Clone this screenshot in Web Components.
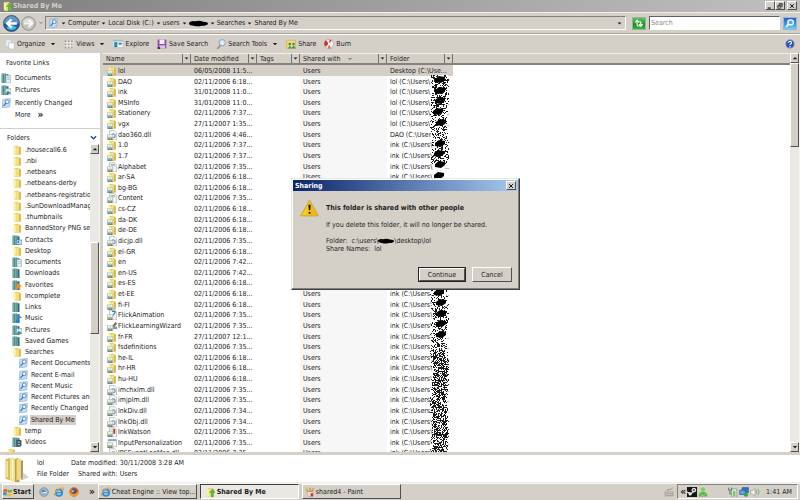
<!DOCTYPE html>
<html lang="en">
<head>
<meta charset="utf-8">
<title>Shared By Me</title>
<style>
html,body{height:100%;margin:0}
body{--face:#d4d0c8;background:var(--face);color:#1c1c1c;font:7px/10px "DejaVu Sans Condensed","Noto Sans",sans-serif;overflow:hidden}
</style>
</head>
<body>
<desk-top></desk-top>
<script>
const BASE = `*{box-sizing:border-box}button,input,a{font:inherit;color:inherit;text-decoration:none}button{border:0;padding:0;margin:0;background:none;display:flex;align-items:center;white-space:nowrap}ul{list-style:none;margin:0;padding:0}h1,h2,p{margin:0;font:inherit}
.raised{background:#d4d0c8;border:1px solid;border-color:#fff #505050 #505050 #fff}`;
function define(name, html, setup){
  const t = document.createElement('template');
  t.innerHTML = '<style>' + BASE + '</style>' + html;
  customElements.define(name, class extends HTMLElement{
    constructor(){ super(); this.attachShadow({mode:'open'}); }
    connectedCallback(){
      if (this.shadowRoot.childNodes.length) return;
      const f = t.content.cloneNode(true);
      if (setup) setup(this, f);
      this.shadowRoot.append(f);
    }
  });
}

const F = '<path d="M3 2l6-1 5 2v12l-9 1-2-2z" fill="#e9cf62"/><path d="M3 2l4 2v12l-4-3z" fill="#fbefa6"/><path d="M8 3l3-1v13H8z" fill="#f6e38c"/><path d="M11 3l3 1v11h-3z" fill="#d9b944"/>';
const PEOPLE = '<path d="M0 7h10v9H0z" fill="#b9bfae"/><circle cx="3" cy="9.500" r="1.800" fill="#f1f5ee"/><circle cx="7" cy="9.500" r="1.800" fill="#f1f5ee"/><path d="M1 16l2-4 2 3 2-3 2 4z" fill="#5d8f7c"/>';
const BOOK = '<path d="M1 1h8v15H1z" fill="#4c8c86"/><path d="M1 1h2v15H1zM5 1h2v15H5z" fill="#7bb3ab"/><path d="M9 2h3v14H9z" fill="#2f6872"/>';
const DOC = '<path d="M4 1h8l3 3v12H4z" fill="#f8fafc" stroke="#9aa4ae"/>';
const SEARCH = '<path d="M3 2l12-1-1 13-12 2z" fill="#c9def2" stroke="#7fa6cf"/><circle cx="10" cy="6" r="3" fill="#f4faff" stroke="#3f7fc4" stroke-width="1.4"/><path d="M8 8l-4 5" stroke="#3f7fc4" stroke-width="2"/>';
const IE = '<circle cx="8" cy="9" r="5" fill="none" stroke="#2c8ee0" stroke-width="3"/><path d="M4 9h9" stroke="#2c8ee0" stroke-width="2"/><path d="M1 14C-1 9 9 0 15 2c1 1 0 3-1 4" fill="none" stroke="#e7a928" stroke-width="1.7"/>';
const ICONS = {
  folder: F,
  shared: F + PEOPLE,
  dll: DOC + '<circle cx="10" cy="9" r="3" fill="none" stroke="#7896b4" stroke-width="2"/>' + PEOPLE,
  app: DOC + '<path d="M6 4h7M6 6h7" stroke="#9b8178"/>' + PEOPLE,
  ink: DOC + '<path d="M6 2h8v8H6z" fill="#e6d9d2"/><path d="M10 3h3v8h-3z" fill="#b8422e"/>' + PEOPLE,
  flick: DOC + '<path d="M8 2h5M9 10l5-8" stroke="#2b83c7" stroke-width="2"/>' + PEOPLE,
  wizard: '<path d="M7 9l7-8 2 3-5 7z" fill="#8f6a55"/><path d="M9 9h7v4H9z" fill="#6f9ac0"/>' + PEOPLE,
  input: '<path d="M2 2h13v12H2z" fill="#fff" stroke="#9aa4ae"/><path d="M2 2h13v3H2z" fill="#8aa4bd"/>' + PEOPLE,
  title: F + '<path d="M10 16V8l-3 1 5-6 4 6h-3v7z" fill="#4fc43a" stroke="#2a8a22" stroke-width=".6"/>',
  book: BOOK,
  docs: BOOK + '<path d="M8 4h7v12H8z" fill="#e8f0f8" stroke="#8ba3b8"/><path d="M10 7h4M10 10h4" stroke="#7f9cba"/>',
  pics: BOOK + '<path d="M7 6h9v8H7z" fill="#d7ecfa" stroke="#7594ae"/><path d="M7 14l4-5 5 5z" fill="#3d8a7c"/>',
  contacts: BOOK + '<path d="M7 8h9v7H7z" fill="#bfe1f7" stroke="#3d80ae"/><circle cx="10" cy="11" r="1.5" fill="#2d6fa0"/>',
  fav: BOOK + '<path d="M10 5l2 3 4 1-3 2 1 4-4-2-4 2 1-4-3-2 4-1z" fill="#f58a1d"/>',
  music: BOOK + '<path d="M10 14V4l5 4" fill="none" stroke="#1b84e0" stroke-width="2"/><circle cx="9" cy="13" r="3" fill="#1b84e0"/>',
  videos: BOOK + '<path d="M7 5h8v10H7z" fill="#354a57"/><path d="M9 7h4v2H9zM9 11h4v2H9z" fill="#9cc7dc"/>',
  search: SEARCH,
  organize: '<path d="M1 1h7l2 2v9H1z" fill="#e6eef4" stroke="#bccbd6"/><path d="M6 6h7l2 2v8H6z" fill="#fff" stroke="#9fb4c4"/>',
  views: '<path d="M1 2h14v13H1z" fill="#eef0f0"/><path d="M1 2h3v3H1zM6 2h3v3H6zM11 2h3v3h-3zM1 7h3v3H1zM6 7h3v3H6zM11 7h3v3h-3zM1 12h3v3H1zM6 12h3v3H6zM11 12h3v3h-3z" fill="#a39e98"/>',
  explore: '<path d="M0 2h16v12H0z" fill="#f4f9fc" stroke="#98adbb"/><path d="M0 2h16v2H0z" fill="#8fbad6"/><path d="M2 5h5v8H2z" fill="#2a8a9d"/><path d="M9 6h5v3H9z" fill="#3c71b5"/>',
  save: '<path d="M1 1h14v14H1z" fill="#8b4fa3"/><path d="M4 1h8v7H4z" fill="#f3eef7"/><path d="M4 10h9v5H4z" fill="#d8c1e2"/><path d="M1 13h4v3H1z" fill="#4b2365"/>',
  mag: '<circle cx="10" cy="6" r="5" fill="#d8eefb" stroke="#85a3ba" stroke-width="1.6"/><path d="M7 10l-5 6" stroke="#9c8a6c" stroke-width="2.4"/>',
  share: '<path d="M1 2h14v13H1z" fill="#f0dc78" stroke="#c8ab3c"/><circle cx="6" cy="8" r="2" fill="#3f7d5c"/><circle cx="12" cy="8" r="2" fill="#47749a"/><path d="M3 15l3-5 3 4 3-4 4 5z" fill="#4f9a55"/>',
  burn: '<circle cx="8" cy="8" r="7.4" fill="#ececf0" stroke="#a9a4aa"/><path d="M8 8L3 2a7 7 0 0 0-1 10zM8 8l1-7 3 1z" fill="#d92b2b"/><path d="M8 8l3 7-5 0z" fill="#d96a5a"/><circle cx="8" cy="8" r="2" fill="#fff"/>',
  help: '<circle cx="8" cy="8" r="7.5" fill="#8996b5"/><circle cx="8" cy="8" r="6" fill="#2b50bd"/><path d="M5.5 6C6 3 11 3 10.500 6.300C10 8 8 8 8 10M8 11.500v2" fill="none" stroke="#fff" stroke-width="1.8"/>',
  refresh: '<path d="M5 4v6q0 3 4 2M2 6l3-4 3 4M11 12V7q0-3-4-2M8 9l3 4 3-4" fill="none" stroke="#fff" stroke-width="1.800"/>',
  find: '<circle cx="9" cy="6" r="4.500" fill="#5fa4ef" stroke="#fff" stroke-width="2"/><path d="M6 9l-4 5" stroke="#fff" stroke-width="2.600"/>',
  stack: '<path d="M1 2l3-1v14l-3-1z" fill="#d9bd56"/><path d="M4 1l3 0v15l-3-1z" fill="#f3e18e"/><path d="M7 2l2-1 1 15H7z" fill="#b8a04a"/><path d="M8 2l3-.5V14l-3 1z" fill="#f0da7c"/><path d="M11 3l1-.5v12l-1 0z" fill="#8c7a45"/><path d="M12 10l4 3-5 2z" fill="#b8b8b4" opacity=".6"/><path d="M2 3v10M5.500 2v12" stroke="#fffbe0" stroke-width=".7"/>',
  win: '<path d="M1 4q3-2 6 0L6 8Q3 6 0 8z" fill="#e8562a"/><path d="M8 4q3 2 7 0l-1 4q-4 2-7 0z" fill="#6cb43c"/><path d="M0 9q3-2 6 0l-1 5q-3-2-5-1z" fill="#3f8fe0"/><path d="M7 10q3 2 7 0l-1 4q-4 2-7 0z" fill="#f2bd23"/>',
  desk: '<circle cx="8" cy="8" r="7" fill="#9fb3c8" stroke="#6d87a3"/><path d="M4 4l8 3-6 5z" fill="#4f7fb4"/><path d="M5 10l7-2" stroke="#fff" stroke-width="2"/>',
  ie: IE,
  fox: '<circle cx="8" cy="8" r="7.500" fill="#d8641c"/><circle cx="8" cy="7" r="4.500" fill="#3b55a8"/><path d="M1 5q2 6 7 6t7-7q2 11-7 12Q0 15 1 5z" fill="#f09a24"/><path d="M3 4l6 2-4 3z" fill="#f5b63a"/>',
  paint: '<path d="M3 7h10l-1 8H4z" fill="#e8e0d4" stroke="#b9a48f"/><path d="M5 8L2 2M8 8V1M10 8l4-6" stroke="#d2862e" stroke-width="2"/><path d="M9 10h4v5H9z" fill="#cc3340"/><path d="M1 1h3v3H1z" fill="#e8c33c"/>',
  keys: '<path d="M1 7h14v8H1z" fill="#aaa69e"/><path d="M3 9h10M3 12h10" stroke="#d6d3cc"/><path d="M6 7q-2-4 2-3t6-3" fill="none" stroke="#99958e" stroke-width="1.500"/>',
  steam: '<path d="M0 0h16v16H0z" fill="#151515"/><circle cx="11" cy="5" r="3" fill="#777" stroke="#fff" stroke-width="1.600"/><circle cx="5" cy="11" r="2.500" fill="#eee"/><path d="M0 8l6 3 4-4" fill="none" stroke="#eee" stroke-width="2"/>',
  buddy: '<circle cx="8" cy="4" r="3.600" fill="#7bcf62"/><path d="M1 15q0-7 7-7t7 7z" fill="#58b544"/><path d="M4 12q4 3 8 0" fill="none" stroke="#b9eca6"/>',
  power: '<path d="M6 3h8v13H6z" fill="#eef5ee" stroke="#6d8a70"/><path d="M8 6h4v9H8z" fill="#79c46d"/><path d="M1 1v4h5V1M3 5v6h3" fill="none" stroke="#4f6f6a" stroke-width="1.500"/>',
  net: '<path d="M5 1h10v8H5z" fill="#2f74c9" stroke="#25507f"/><path d="M1 5h9v7H1z" fill="#5aa6ea" stroke="#25507f"/><circle cx="11" cy="12" r="3.600" fill="#37a64a"/>',
  sound: '<path d="M1 6h3l4-4v13l-4-4H1z" fill="#f7f7f7" stroke="#8b8b8b"/><path d="M10 5q2 3 0 6M13 3q3 5 0 10" fill="none" stroke="#6fb06a" stroke-width="1.300"/>',
  warn: '<path d="M8 1l7.500 14H.5z" fill="#fbc918" stroke="#c3a04a" stroke-width=".8" stroke-linejoin="round"/><path d="M8 2l7 12.500H8z" fill="#f0a80c" opacity=".5"/><path d="M7 5h2l-.4 5h-1.200zM7.200 11.500h1.600v1.600H7.200z" fill="#1b1b1b"/>',
  back: '<circle cx="8" cy="8" r="7.600" fill="#25588f" stroke="#46586c" stroke-width=".8"/><path d="M1 8a7 7 0 0 1 14 0z" fill="#5f97c6"/><path d="M3 12a7 7 0 0 0 10 0q-5-5-10 0" fill="#37bfe8"/><path d="M8 4L4 8l4 4M4 8h9" fill="none" stroke="#fff" stroke-width="2.200"/>',
  fwd: '<circle cx="8" cy="8" r="7.300" fill="#c3c1bc" stroke="#8f8f8d"/><path d="M1.500 7a7 7 0 0 1 13 0z" fill="#dedcd8"/><path d="M8 4l4 4-4 4M12 8H3" fill="none" stroke="#f6f5f2" stroke-width="2.200"/>',
  down: '<path d="M2 5h12l-6 6z" fill="currentColor"/>',
  up: '<path d="M2 11h12L8 5z" fill="currentColor"/>',
  chev: '<path d="M2 5l6 6 6-6" fill="none" stroke="#2546a0" stroke-width="3"/>',
  close: '<path d="M3 3l10 10M13 3L3 13" stroke="#111" stroke-width="2.600"/>',
  min: '<path d="M2 12h8v3H2z" fill="#111"/>',
  restore: '<path d="M6 2h8v7h-3M6 2v3M6 3h8M2 7h8v7H2zM2 8h8" fill="none" stroke="#111" stroke-width="1.800"/>',
  blot: '<path d="M0 6q2-5 5-3 4-3 7 1 4 0 4 5-1 4-5 4-4 3-7 0-5-1-4-7z" fill="#000"/>'
};
define('ui-icon', `<style>:host{display:inline-block;flex:none;width:var(--w,10px);height:var(--h,10px)}svg{display:block;width:100%;height:100%}</style><svg viewBox="0 0 16 16" preserveAspectRatio="none" aria-hidden="true"></svg>`,
  (el, f) => f.querySelector('svg').innerHTML = ICONS[el.getAttribute('name')]);

define('caption-buttons', `<style>:host{display:flex;margin-left:auto}button{width:10px;height:9px;justify-content:center}ui-icon{--w:6px;--h:6px}.gap{margin-left:2px}</style>
<button class="raised" aria-label="Minimize"><ui-icon name="min"></ui-icon></button><button class="raised" aria-label="Restore"><ui-icon name="restore"></ui-icon></button><button class="raised gap" aria-label="Close"><ui-icon name="close"></ui-icon></button>`);

define('title-bar', `<style>:host{display:flex;align-items:center;gap:1px;height:12px;flex:none;padding:0 3px 1px 2px;color:#d4d0c8;font-weight:bold;background:linear-gradient(90deg,#808080,#c0c0c0)}h1{font-size:7px}</style>
<ui-icon name="title"></ui-icon><h1><slot></slot></h1><caption-buttons></caption-buttons>`);

define('address-row', `<style>
:host{display:flex;align-items:center;flex:none;height:22px;padding:0 3px;border-top:1px solid #f1efea;border-bottom:1px solid #a8a49c}
.nav{--w:17px;--h:17px}.fwd{--w:15px;--h:15px;margin-left:1px}.hist{color:#a5a29b;--w:6px;--h:6px;width:9px;justify-content:center}
nav{flex:1;display:flex;align-items:center;height:14px;border:1px solid;border-color:#808080 #fff #fff #808080;padding:0 3px 0 2px;gap:2px}
nav ui-icon[name=down]{--w:5px;--h:5px}
nav .blot{--w:19px;--h:7px}.drop{margin-left:auto}
nav .first{margin-left:1px}
.ref{width:14px;height:13px;margin:0 3px 0 6px;background:linear-gradient(#5cc45a,#13902b 60%,#35b83c);border:1px solid #9bb38f;justify-content:center;--w:10px;--h:9px}
input{width:131px;height:14px;border:1px solid;border-color:#606060 #fff #fff #606060;background:#fff;padding:0 1px;border-radius:0;outline:0}
input::placeholder{color:#8a8a8a;opacity:1}
.find{width:14px;height:13px;margin-left:3px;background:linear-gradient(#2462d0,#3f8ee6 50%,#63d3f4);border:1px solid #9cb3cf;justify-content:center;--w:10px;--h:9px}
</style>
<button class="nav" aria-label="Back"><ui-icon name="back"></ui-icon></button><button class="nav fwd" aria-label="Forward"><ui-icon name="fwd"></ui-icon></button><button class="hist" aria-label="History"><ui-icon name="down"></ui-icon></button>
<nav aria-label="Address"><ui-icon name="search"></ui-icon><ui-icon class="first" name="down"></ui-icon><a href="#">Computer</a><ui-icon name="down"></ui-icon><a href="#">Local Disk (C:)</a><ui-icon name="down"></ui-icon><a href="#">users</a><ui-icon name="down"></ui-icon><ui-icon class="blot" name="blot"></ui-icon><ui-icon name="down"></ui-icon><a href="#">Searches</a><ui-icon name="down"></ui-icon><a href="#">Shared By Me</a><button class="drop" aria-label="Previous locations"><ui-icon name="down"></ui-icon></button></nav>
<button class="ref" aria-label="Refresh"><ui-icon name="refresh"></ui-icon></button>
<input type="text" placeholder="Search" aria-label="Search"><button class="find" aria-label="Go"><ui-icon name="find"></ui-icon></button>`);

define('tool-item', `<style>:host{display:block}button{gap:2px;height:14px}.d{--w:6px;--h:6px;margin-left:3px}</style><button><ui-icon></ui-icon><slot></slot></button>`, (el, f) => {
  f.querySelector('ui-icon').setAttribute('name', el.getAttribute('icon'));
  if (el.hasAttribute('menu')) f.querySelector('button').insertAdjacentHTML('beforeend', '<ui-icon class="d" name="down"></ui-icon>');
});
define('tool-bar', `<style>:host{display:flex;align-items:center;flex:none;height:19px;padding:0 5px;gap:8px;border-top:1px solid #fff}.help{margin-left:auto}</style>
<tool-item icon="organize" menu>Organize</tool-item><tool-item icon="views" menu>Views</tool-item><tool-item icon="explore">Explore</tool-item><tool-item icon="save">Save Search</tool-item><tool-item icon="mag" menu>Search Tools</tool-item><tool-item icon="share">Share</tool-item><tool-item icon="burn">Burn</tool-item><button class="help" aria-label="Help"><ui-icon name="help"></ui-icon></button>`);

define('scroll-bar', `<style>:host{display:flex;flex-direction:column;width:10px;flex:none;background:#ebe9e4;border-right:1px solid #f5f4f1}button{height:10px;justify-content:center;--w:6px;--h:6px;flex:none}.a{flex:var(--before,0) 0 0}.t{flex:var(--thumb,1) 0 0}.b{flex:var(--after,1) 0 0}</style>
<button class="raised" aria-label="Scroll up"><ui-icon name="up"></ui-icon></button><div class="a"></div><div class="t raised"></div><div class="b"></div><button class="raised" aria-label="Scroll down"><ui-icon name="down"></ui-icon></button>`);

define('favorite-links', `<style>:host{display:block;flex:none;height:76px;padding:5px 5px 0 1px;border-bottom:1px solid #d4d0c8;background:#fff}h2{margin:0 0 3px 5px}a{display:flex;align-items:center;gap:4px;height:13px;white-space:nowrap}li:nth-child(2) a{height:12px}.more{padding-left:14px;height:12px;gap:7px}.more b{font-size:10px}</style>
<h2>Favorite Links</h2><ul><li><a href="#"><ui-icon name="docs"></ui-icon>Documents</a></li><li><a href="#"><ui-icon name="pics"></ui-icon>Pictures</a></li><li><a href="#"><ui-icon name="search"></ui-icon>Recently Changed</a></li></ul><button class="more">More <b>»</b></button>`);

const TREE = 'folder|.housecall6.6;folder|.nbi;folder|.netbeans;folder|.netbeans-derby;folder|.netbeans-registration;folder|.SunDownloadManager;folder|.thumbnails;folder|BannedStory PNG sec;contacts|Contacts;folder|Desktop;docs|Documents;book|Downloads;fav|Favorites;folder|Incomplete;book|Links;music|Music;pics|Pictures;book|Saved Games;folder|Searches;search|Recent Documents|s;search|Recent E-mail|s;search|Recent Music|s;search|Recent Pictures and|s;search|Recently Changed|s;search|Shared By Me|s on;folder|temp;videos|Videos;folder||r';
define('folder-tree', `<style>:host{display:flex;flex-direction:column;flex:1;min-height:0;background:#fff}h2{display:flex;justify-content:space-between;align-items:center;height:15px;padding:2px 3px 0 7px;flex:none;--w:7px;--h:7px}.body{flex:1;min-height:0;display:flex}ul{flex:1;min-width:0;overflow:hidden}li{height:11px}li:nth-child(4n){height:12px}a{display:flex;align-items:center;gap:2px;height:11px;padding-left:12px;white-space:nowrap}.s a{padding-left:18px}.r a{padding-left:6px}span{padding:0 1px}.on span{background:#d4d0c8}scroll-bar{--before:88;--thumb:90;--after:108}</style>
<h2>Folders<ui-icon name="chev"></ui-icon></h2><div class="body"><ul></ul><scroll-bar></scroll-bar></div>`, (el, f) => {
  f.querySelector('ul').innerHTML = TREE.split(';').map(r => { const [i, n, c] = r.split('|'); return `<li class="${c||''}"><a href="#"><ui-icon name="${i}"></ui-icon><span>${n}</span></a></li>`; }).join('');
});

const A='02/11/2006 6:18...', B='02/11/2006 7:35...', C='02/11/2006 7:37...', D='31/01/2008 11:0...', E='02/11/2006 7:34...', G='02/11/2006 7:42...';
const K='ink (C:\\Users\\', L='lol (C:\\Users\\';
const ROWS=[['shared','lol','06/05/2008 11:5...','Desktop (C:\\Use...'],['shared','DAO',A,L],['shared','ink',D,L],['shared','MSInfo',D,L],['shared','Stationery',C,L],['shared','vgx','27/11/2007 1:35...',L],['dll','dao360.dll','02/11/2006 4:46...','DAO (C:\\User'],['shared','1.0',C],['shared','1.7',C],['app','Alphabet',B],['shared','ar-SA',A],['shared','bg-BG',A],['app','Content',B],['shared','cs-CZ',A],['shared','da-DK',A],['shared','de-DE',A],['dll','dicjp.dll',B],['shared','el-GR',A],['shared','en',G],['shared','en-US',G],['shared','es-ES',A],['shared','et-EE',A],['shared','fi-FI',A],['flick','FlickAnimation',B],['wizard','FlickLearningWizard',B],['shared','fr-FR','27/11/2007 12:1...'],['shared','fsdefinitions',B],['shared','he-IL',A],['shared','hr-HR',A],['shared','hu-HU',A],['dll','imchxlm.dll',B],['dll','imjplm.dll',B],['dll','InkDiv.dll',E],['dll','InkObj.dll',E],['ink','InkWatson',B],['input','InputPersonalization',B],['dll','IPSEventLogMsg.dll',B]];
define('file-list', `<style>
:host{display:flex;flex:1;min-width:0;background:#fff}
.view{flex:1;min-width:0;overflow:hidden;position:relative}
table{width:100%;table-layout:fixed;border-collapse:separate;border-spacing:0}
th{height:12px;padding:0;background:#d4d0c8;text-align:left;font-weight:normal;border-top:1px solid #f1efea;border-bottom:2px solid #85827c}
.h{display:flex;align-items:center;height:9px;padding-left:3px;border-right:1px solid #707070}
.h button{margin-left:auto;width:8px;height:9px;border-left:1px solid #707070;justify-content:center;--w:5px;--h:5px}
.sort{margin-left:6px;--w:6px;--h:6px;color:#8c8984}
td{height:11px;padding:0 0 0 3px;line-height:10px;overflow:hidden;white-space:nowrap}
tr:nth-child(8n+3) td,tr:nth-child(8n+5) td,tr:nth-child(8n+8) td{height:10px}
td:nth-child(4){background:#f7f7f7}
tr.on td{background:#d4d0c8}tr.on td:last-child{background:#fff}
.n{display:flex;align-items:center;gap:1px;height:10px;padding-left:1px}
.p{display:flex;justify-content:space-between;padding-right:4px}
col:nth-child(1){width:88px}col:nth-child(2){width:66px}col:nth-child(3){width:43px}col:nth-child(4){width:87px}col:nth-child(5){width:66px}
spray-marks{position:absolute;left:325px;top:22px}
scroll-bar{--thumb:82;--after:296}
</style>
<div class="view"><table><colgroup><col><col><col><col><col><col></colgroup><thead><tr></tr></thead><tbody></tbody></table><spray-marks></spray-marks></div><scroll-bar></scroll-bar>`, (el, f) => {
  f.querySelector('thead tr').innerHTML = ['Name','Date modified','Tags','Shared with','Folder'].map(t => `<th scope="col"><div class="h">${t}${t==='Shared with'?'<ui-icon class="sort" name="down"></ui-icon>':''}<button aria-label="Filter ${t}"><ui-icon name="down"></ui-icon></button></div></th>`).join('') + '<th></th>';
  f.querySelector('tbody').innerHTML = ROWS.map((r,i) => `<tr class="${i?'':'on'}"><td><div class="n"><ui-icon name="${r[0]}"></ui-icon>${r[1]}</div></td><td>${r[2]}</td><td></td><td>Users</td><td><div class="p"><span>${r[3]||K}</span>${i?'<span>..</span>':''}</div></td><td></td></tr>`).join('');
});

/* Redaction marks: seeded spray speckle plus one heavier stroke per row. */
define('spray-marks', `<style>:host{display:block}svg{display:block}</style><svg width="24" height="382" aria-hidden="true"><path class="w" fill="#fff"/><path class="k" fill="#1a1a1a"/><path class="b"/></svg>`, (el, f) => {
  let s = 7; const rnd = () => (s = (s * 16807) % 2147483647) / 2147483647;
  let k = '', w = '', b = '';
  const spot = (x, y) => `M${x} ${y}h1v1h-1z`;
  for (let y = 0; y < 381; y++) {
    if (y > 88 && y < 214) continue;
    const density = y > 274 ? .58 : y < 34 ? .52 : .36;
    for (let x = 1; x < 21; x++) {
      const d = Math.abs(x - 11 - Math.sin(y / 9)) / 8;
      if (d > 1.1) continue;
      const r = rnd();
      if (r < density * (d > .8 ? .6 : 1)) k += spot(x, y);
      else if (r < .85) w += spot(x, y);
    }
  }
  for (let i = 0; i < 25; i++) {
    const y = Math.round(i * 10.625) + 3, x = 5 + Math.round(rnd() * 3);
    if (i === 5) continue;
    b += `M${x} ${y + 1}l4-3 6 1v3l-4 3-6-1z`;
  }
  f.querySelector('.k').setAttribute('d', k); f.querySelector('.w').setAttribute('d', w); f.querySelector('.b').setAttribute('d', b);
});

define('details-pane', `<style>:host{display:flex;align-items:center;flex:none;height:31px;padding:0 4px;gap:8px;background:#fff;border-top:3px solid #d4d0c8;border-bottom:1px solid #efede9}.i{--w:25px;--h:26px}dl{display:grid;grid-template-columns:max-content max-content max-content;grid-auto-rows:11px;column-gap:2px;margin:0}dt,dd{margin:0}dt{text-align:right}</style>
<ui-icon class="i" name="stack"></ui-icon><dl><dd>lol</dd><dt>Date modified:</dt><dd>30/11/2008 3:28 AM</dd><dd>File Folder</dd><dt>Shared with:</dt><dd>Users</dd></dl>`);

define('task-button', `<style>:host{display:block;width:99px}button{width:100%;height:15px;padding:0 2px;gap:1px;overflow:hidden}:host([active]) button{font-weight:bold;padding-left:4px;gap:2px;background:#eae8e3;border-color:#404040 #fff #fff #404040}</style><button class="raised"><ui-icon></ui-icon><slot></slot></button>`, (el, f) => f.querySelector('ui-icon').setAttribute('name', el.getAttribute('icon')));
define('task-bar', `<style>:host{display:flex;align-items:center;flex:none;height:17px;padding:0 2px 1px;border-top:1px solid #f4f3f0}.start{width:32px;height:15px;font-weight:bold}.q{display:flex;gap:5px;margin:0 10px 0 5px}.more{margin-right:3px;font-weight:bold;font-size:10px}.tasks{display:flex;gap:3px}
.keys{margin-left:auto}.tray{display:flex;align-items:center;height:15px;margin-left:3px;padding:0 5px 0 2px;gap:1px;border:1px solid;border-color:#808080 #fff #fff #808080}.tray b{font-size:10px}.g{margin-left:19px}time{margin-left:5px;white-space:nowrap}</style>
<button class="start raised"><ui-icon name="win"></ui-icon>Start</button><div class="q"><button aria-label="Show desktop"><ui-icon name="desk"></ui-icon></button><button aria-label="Internet Explorer"><ui-icon name="ie"></ui-icon></button><button aria-label="Firefox"><ui-icon name="fox"></ui-icon></button></div><button class="more">»</button>
<div class="tasks"><task-button icon="ie">Cheat Engine :: View top...</task-button><task-button icon="title" active>Shared By Me</task-button><task-button icon="paint">shared4 - Paint</task-button></div>
<ui-icon class="keys" name="keys"></ui-icon><div class="tray"><b>«</b><ui-icon name="steam"></ui-icon><ui-icon name="buddy"></ui-icon><ui-icon class="g" name="power"></ui-icon><ui-icon name="net"></ui-icon><ui-icon name="sound"></ui-icon><time>1:41 AM</time></div>`);

define('sharing-dialog', `<style>
:host{display:block;width:229px;background:#d4d0c8;border:1px solid;border-color:#e8e6e1 #404040 #404040 #e8e6e1;padding:1px;box-shadow:inset -1px -1px #808080,inset 1px 1px #fff}
header{display:flex;justify-content:space-between;align-items:center;height:11px;padding:0 2px;background:linear-gradient(90deg,#0a246a,#a6caf0);color:#fff;font-weight:bold}
header button{width:10px;height:9px;justify-content:center;--w:6px;--h:6px}
.body{display:flex;gap:7px;padding:8px 7px 0}.i{--w:19px;--h:18px}
h2{font-weight:bold;line-height:10px;margin:4px 0 7px}p{line-height:10px}.f{margin-top:7px}p.f,p.g{line-height:8px}
.blot{--w:16px;--h:6px;vertical-align:-1px}
footer{display:flex;justify-content:flex-end;gap:6px;padding:14px 6px 6px}footer button{width:40px;height:15px;justify-content:center;border-color:#fff #606060 #606060 #fff}footer .d{width:48px;outline:1px solid #222;outline-offset:-1px;border-width:2px}
</style><header><span>Sharing</span><button class="raised" aria-label="Close"><ui-icon name="close"></ui-icon></button></header>
<div class="body"><ui-icon class="i" name="warn"></ui-icon><div><h2>This folder is shared with other people</h2><p>If you delete this folder, it will no longer be shared.</p><p class="f">Folder:&nbsp; c:\\users\\<ui-icon class="blot" name="blot"></ui-icon>\\desktop\\lol</p><p class="g">Share Names:&nbsp; lol</p></div></div>
<footer><button class="raised d">Continue</button><button class="raised">Cancel</button></footer>`);

define('desk-top', `<style>:host{display:flex;flex-direction:column;height:100vh;position:relative}main{flex:1;min-height:0;display:flex}aside{width:103px;flex:none;display:flex;flex-direction:column;border-right:3px solid #d4d0c8}sharing-dialog{position:absolute;left:291px;top:178px}</style>
<title-bar>Shared By Me</title-bar><address-row></address-row><tool-bar></tool-bar><main><aside><favorite-links></favorite-links><folder-tree></folder-tree></aside><file-list></file-list></main><details-pane></details-pane><task-bar></task-bar><sharing-dialog role="dialog" aria-label="Sharing"></sharing-dialog>`);
</script>
</body>
</html>
